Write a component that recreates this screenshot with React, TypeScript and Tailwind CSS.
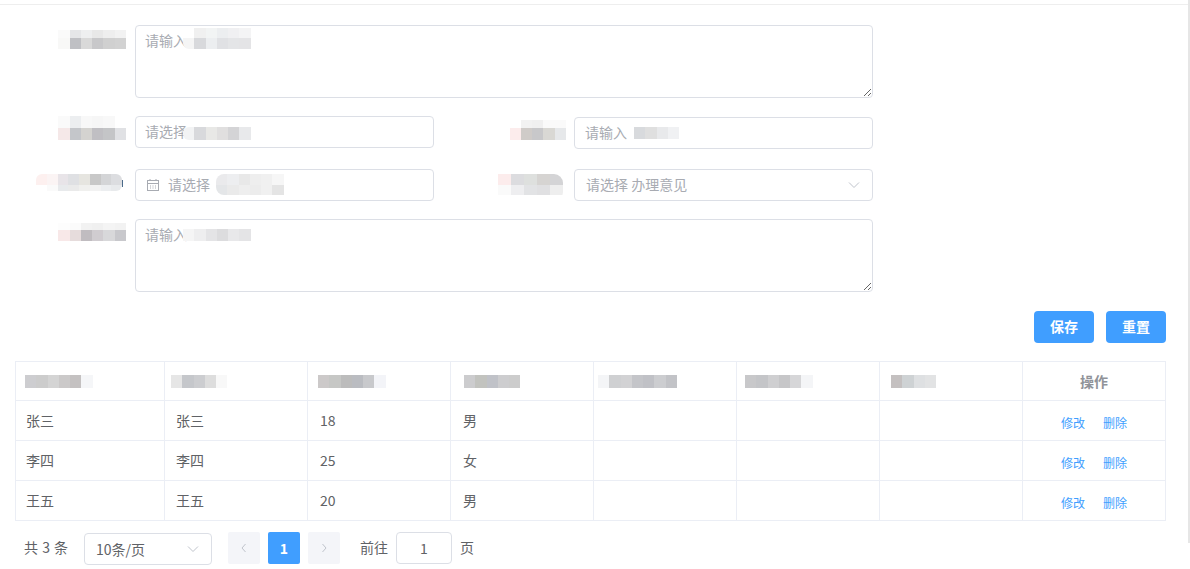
const FONT = "font-['Noto_Sans_CJK_SC',sans-serif]";

// Blurred-out bits of the screenshot: rows of small tiles, each row is one list of colours.
function Mosaic({ rows, className = "" }: { rows: { h: string; w: string; tiles: string[] }[]; className?: string }) {
  return (
    <div className={`flex flex-col overflow-hidden ${className}`}>
      {rows.map((row, i) => (
        <div key={i} className={`flex ${row.h}`}>
          {row.tiles.map((t, j) => (
            <span key={j} className={`block h-full ${row.w} ${t}`} />
          ))}
        </div>
      ))}
    </div>
  );
}

const L = { w: "w-[11.3px]" };

const LABEL_1 = [
  { h: "h-[8px]", ...L, tiles: ["bg-[#fafafa]", "bg-[#e5e6e8]", "bg-[#eeeff0]", "bg-[#e8e8e8]", "bg-[#eeeeee]", "bg-[#f2f2f2]"] },
  { h: "h-[11px]", ...L, tiles: ["bg-[#f8f8f7]", "bg-[#bfc0c4]", "bg-[#d9d9d9]", "bg-[#c8c8ca]", "bg-[#d0d0d0]", "bg-[#d2d2d2]"] },
];
const HINT_1 = [
  { h: "h-[10px]", ...L, tiles: ["bg-white", "bg-[#f0f0f0]", "bg-[#f2f4f4]", "bg-[#eceef0]", "bg-[#f0f0f2]", "bg-[#f4f4f5]"] },
  { h: "h-[11px]", ...L, tiles: ["bg-[#f5f5f5]", "bg-[#d8d9dc]", "bg-[#eceef0]", "bg-[#e0e1e4]", "bg-[#e4e5e7]", "bg-[#e4e4e6]"] },
];
const LABEL_2 = [
  { h: "h-[12px]", ...L, tiles: ["bg-[#fafafa]", "bg-[#eceef0]", "bg-[#f8f8f8]", "bg-[#f6f6f6]", "bg-[#f8f8f8]", "bg-white"] },
  { h: "h-[12px]", ...L, tiles: ["bg-[#f5e8e8]", "bg-[#c4c6ca]", "bg-[#d4d3d0]", "bg-[#c0bfc3]", "bg-[#c4c5c7]", "bg-[#e0e1e4]"] },
];
const HINT_2 = [
  { h: "h-[13px]", ...L, tiles: ["bg-[#f2f3f4]", "bg-[#d8d9dc]", "bg-[#e8e8e6]", "bg-[#e0dfdf]", "bg-[#d4d4d6]", "bg-[#e8e9eb]"] },
];
const LABEL_3 = [
  { h: "h-[11px]", w: "w-[10.75px]", tiles: ["bg-[#fdf0ef]", "bg-[#fbf4f4]", "bg-[#e8e4e8]", "bg-[#dfe0e3]", "bg-[#e6e5e0]", "bg-[#c8c8c8]", "bg-[#d4d5d7]", "bg-[#dcdde0]"] },
  { h: "h-[6px]", w: "w-[10.75px]", tiles: ["bg-white", "bg-[#fafafa]", "bg-[#e8eaec]", "bg-[#eaeaea]", "bg-[#f0f0ee]", "bg-[#f2f2f2]", "bg-[#eceef0]", "bg-[#e8eaec]"] },
];
const HINT_3 = [
  { h: "h-[11px]", ...L, tiles: ["bg-[#eaeaec]", "bg-[#edeef0]", "bg-[#e8e8e8]", "bg-[#eeeeee]", "bg-[#f0f0f0]", "bg-[#f6f6f6]"] },
  { h: "h-[10px]", ...L, tiles: ["bg-[#e4e6e8]", "bg-[#eaeaea]", "bg-[#eeeeee]", "bg-[#ececec]", "bg-[#f0f0f0]", "bg-[#e4e4e4]"] },
];
const LABEL_4 = [
  { h: "h-[7px]", ...L, tiles: ["bg-[#fdfdfd]", "bg-[#fbfbfb]", "bg-[#f2f2f2]", "bg-[#f0f0f0]", "bg-[#f4f4f4]", "bg-[#f2f2f2]"] },
  { h: "h-[11px]", ...L, tiles: ["bg-[#f8e8e8]", "bg-[#e6dcdc]", "bg-[#c0bcc0]", "bg-[#d0ccd0]", "bg-[#d8d8da]", "bg-[#c8c8cc]"] },
];
const HINT_4 = [
  { h: "h-[12px]", ...L, tiles: ["bg-[#f5f5f5]", "bg-[#eeeeef]", "bg-[#e4e4e6]", "bg-[#dcdcde]", "bg-[#e8e8ea]", "bg-[#e4e4e6]"] },
];
const RIGHT_LABEL_2 = [
  { h: "h-[8px]", ...L, tiles: ["bg-white", "bg-[#f2f2f2]", "bg-[#f0f0f0]", "bg-[#fafafa]", "bg-[#fafafa]"] },
  { h: "h-[12px]", ...L, tiles: ["bg-[#fcecec]", "bg-[#cfcbc8]", "bg-[#c8c8ca]", "bg-[#d9d8d4]", "bg-[#e6e8ea]"] },
];
const RIGHT_HINT_2 = [
  { h: "h-[12px]", ...L, tiles: ["bg-[#d8dadd]", "bg-[#dfdfdf]", "bg-[#e8e9eb]", "bg-[#f0f1f3]"] },
];
const RIGHT_LABEL_3 = [
  { h: "h-[11px]", w: "w-[13px]", tiles: ["bg-[#fcecec]", "bg-[#dcdcdf]", "bg-[#dee0de]", "bg-[#d6d4d2]", "bg-[#d4d4d6]"] },
  { h: "h-[10px]", w: "w-[13px]", tiles: ["bg-[#fafafa]", "bg-[#eeeef0]", "bg-[#e2e3e5]", "bg-[#e0e0e2]", "bg-[#eeeeee]"] },
];

const HEAD = [
  { pad: "pl-[9px]", tiles: ["bg-[#cdcdd0]", "bg-[#cccccc]", "bg-[#d4d4d4]", "bg-[#cbc9c9]", "bg-[#c4c1c1]", "bg-[#f5f6f8]"] },
  { pad: "pl-[6px]", tiles: ["bg-[#e6e6e6]", "bg-[#c5c7cb]", "bg-[#cccdd0]", "bg-[#dddddd]", "bg-[#f8f8f8]"] },
  { pad: "pl-[10px]", tiles: ["bg-[#ccc9c9]", "bg-[#c6c7c5]", "bg-[#bcbcbc]", "bg-[#babcc1]", "bg-[#c8c9cc]", "bg-[#f3f4f8]"] },
  { pad: "pl-[13px]", tiles: ["bg-[#ccccce]", "bg-[#c2c3bf]", "bg-[#c0c2c8]", "bg-[#cdcdcf]", "bg-[#cccccc]"] },
  { pad: "pl-[4px]", tiles: ["bg-[#f4f5f7]", "bg-[#cfd0d2]", "bg-[#d2d2d4]", "bg-[#c4c5c9]", "bg-[#c0c1c6]", "bg-[#cccdd0]", "bg-[#c2c3c7]"] },
  { pad: "pl-[8px]", tiles: ["bg-[#c8c8ca]", "bg-[#c4c5c8]", "bg-[#cfcfd1]", "bg-[#c6c6c8]", "bg-[#d6d6d8]", "bg-[#f4f5f7]"] },
  { pad: "pl-[11px]", tiles: ["bg-[#c4c0c0]", "bg-[#ced2d4]", "bg-[#dee0e2]", "bg-[#e2e3e4]"] },
];

const ROWS = [
  { name: "张三", nick: "张三", age: "18", sex: "男" },
  { name: "李四", nick: "李四", age: "25", sex: "女" },
  { name: "王五", nick: "王五", age: "20", sex: "男" },
];

const BOX = "block rounded-[4px] border border-[#dcdfe6] bg-white text-[14px] text-[#606266] outline-none placeholder:text-[#a8abb2]";

function Calendar() {
  return (
    <svg width="12" height="12" viewBox="0 0 12 12" fill="none" stroke="#a8abb2" strokeWidth="1">
      <rect x="0.5" y="1.5" width="11" height="10" />
      <path d="M0.5 4.5h11M3 0v2M9 0v2" />
      <path d="M3 7h1M5.5 7h1M8 7h1M3 9h1M5.5 9h1M8 9h1" />
    </svg>
  );
}

function Chevron({ dir, className = "" }: { dir: "down" | "left" | "right"; className?: string }) {
  const d = dir === "down" ? "M1 3.5l5 5 5-5" : dir === "left" ? "M7.5 2l-3.5 4 3.5 4" : "M4.5 2l3.5 4-3.5 4";
  return (
    <svg width="12" height="12" viewBox="0 0 12 12" fill="none" stroke="#c0c4cc" strokeWidth="1" className={className}>
      <path d={d} />
    </svg>
  );
}

function PageButton({ children, active }: { children: React.ReactNode; active?: boolean }) {
  return (
    <div className={`flex h-8 w-8 items-center justify-center rounded-[2px] text-[14px] font-bold ${active ? "bg-[#409eff] text-white" : "bg-[#f4f5f9]"}`}>
      {children}
    </div>
  );
}

export default function App() {
  return (
    <div className={`relative h-[569px] w-[1190px] overflow-hidden bg-white ${FONT}`}>
      <div className="mt-1 h-px bg-[#eeeeee]" />
      <div className="absolute right-0 top-0 h-[543px] w-[2px] bg-[#e6e6e6]" />

      {/* form */}
      <div className="flex pt-5">
        <div className="flex w-[135px] justify-end pr-[9px] pt-[5px]">
          <Mosaic rows={LABEL_1} />
        </div>
        <div className="relative">
          <textarea placeholder="请输入" className={`${BOX} h-[73px] w-[738px] resize-y px-[9px] pb-[6px] pt-[4px]`} />
          <Mosaic rows={HINT_1} className="absolute left-[48px] top-[3px] rounded-l-[6px]" />
        </div>
      </div>

      <div className="mt-[18px] flex">
        <div className="flex w-[135px] justify-end pr-[9px]">
          <Mosaic rows={LABEL_2} className="rounded-bl-[8px]" />
        </div>
        <div className="relative">
          <input placeholder="请选择" className={`${BOX} h-8 w-[299px] px-[9px] pb-[2px]`} />
          <Mosaic rows={HINT_2} className="absolute left-[48px] top-[11px] rounded-l-[6px]" />
        </div>
        <div className="mt-px flex w-[140px] justify-end pr-2 pt-[3px]">
          <Mosaic rows={RIGHT_LABEL_2} />
        </div>
        <div className="relative mt-px">
          <input placeholder="请输入" className={`${BOX} h-8 w-[299px] px-[10px] pb-[2px]`} />
          <Mosaic rows={RIGHT_HINT_2} className="absolute left-[60px] top-[10px]" />
        </div>
      </div>

      <div className="mt-5 flex">
        <div className="flex w-[135px] items-start justify-end pr-[12px] pt-[5px]">
          <Mosaic rows={LABEL_3} className="rounded-[6px]" />
          <span className="mt-[6px] h-[7px] w-px bg-[#4a6a8a]" />
        </div>
        <div className="relative flex h-8 w-[299px] items-center rounded-[4px] border border-[#dcdfe6] bg-white pl-[11px]">
          <Calendar />
          <span className="mb-[2px] ml-[9px] text-[14px] text-[#a8abb2]">请选择</span>
          <Mosaic rows={HINT_3} className="absolute left-[80px] top-[4px] rounded-l-[8px]" />
        </div>
        <div className="flex w-[140px] justify-end pr-[11px] pt-[5px]">
          <Mosaic rows={RIGHT_LABEL_3} className="rounded-r-[9px]" />
        </div>
        <div className="flex h-8 w-[299px] items-center justify-between rounded-[4px] border border-[#dcdfe6] bg-white pl-[11px] pr-[12px]">
          <span className="mb-[2px] text-[14px] text-[#a8abb2]">请选择 办理意见</span>
          <Chevron dir="down" />
        </div>
      </div>

      <div className="mt-[18px] flex">
        <div className="flex w-[135px] justify-end pr-[9px] pt-[4px]">
          <Mosaic rows={LABEL_4} />
        </div>
        <div className="relative">
          <textarea placeholder="请输入" className={`${BOX} h-[73px] w-[738px] resize-y px-[9px] pb-[6px] pt-[4px]`} />
          <Mosaic rows={HINT_4} className="absolute left-[48px] top-[10px]" />
        </div>
      </div>

      {/* actions */}
      <div className="mt-[19px] flex w-[1166px] justify-end gap-3">
        <button className="h-8 w-[60px] rounded-[4px] bg-[#409eff] pb-[2px] text-[14px] font-bold text-white">保存</button>
        <button className="h-8 w-[60px] rounded-[4px] bg-[#409eff] pb-[2px] text-[14px] font-bold text-white">重置</button>
      </div>

      {/* table */}
      <div className="ml-[15px] mt-[18px] w-[1150px]">
        <table className="w-full table-fixed border-collapse text-[14px] text-[#606266]">
          <colgroup>
            <col className="w-[149px]" />
            <col className="w-[143px]" />
            <col className="w-[143px]" />
            <col className="w-[143px]" />
            <col className="w-[143px]" />
            <col className="w-[143px]" />
            <col className="w-[143px]" />
            <col className="w-[143px]" />
          </colgroup>
          <thead>
            <tr className="h-[39px]">
              {HEAD.map((h, i) => (
                <th key={i} className={`border border-[#ebeef5] ${h.pad} align-top pt-[13px]`}>
                  <Mosaic rows={[{ h: "h-[13px]", w: "w-[11.3px]", tiles: h.tiles }]} />
                </th>
              ))}
              <th className="border border-[#ebeef5] text-[14px] font-bold text-[#909399]">操作</th>
            </tr>
          </thead>
          <tbody>
            {ROWS.map((r) => (
              <tr key={r.age} className="h-10">
                <td className="border border-[#ebeef5] pl-[10px]">{r.name}</td>
                <td className="border border-[#ebeef5] pl-[11px]">{r.nick}</td>
                <td className="border border-[#ebeef5] pl-3">{r.age}</td>
                <td className="border border-[#ebeef5] pl-3">{r.sex}</td>
                <td className="border border-[#ebeef5]" />
                <td className="border border-[#ebeef5]" />
                <td className="border border-[#ebeef5]" />
                <td className="border border-[#ebeef5]">
                  <div className="flex justify-center gap-[18px] pt-[4px] text-[12px] text-[#409eff]">
                    <span>修改</span>
                    <span>删除</span>
                  </div>
                </td>
              </tr>
            ))}
          </tbody>
        </table>
      </div>

      {/* pagination */}
      <div className="ml-6 mt-[11px] flex items-start text-[14px] text-[#606266]">
        <span className="mt-[5px] w-[60px] [word-spacing:1px]">共 3 条</span>
        <div className="mt-px flex h-8 w-[128px] items-center justify-between rounded-[4px] border border-[#dcdfe6] pl-[11px] pr-[12px]">
          <span>10条/页</span>
          <Chevron dir="down" />
        </div>
        <div className="ml-4 flex gap-2">
          <PageButton><Chevron dir="left" /></PageButton>
          <PageButton active>1</PageButton>
          <PageButton><Chevron dir="right" /></PageButton>
        </div>
        <span className="ml-5 mt-[5px]">前往</span>
        <div className="ml-2 flex h-8 w-14 items-center justify-center rounded-[4px] border border-[#dcdfe6]">1</div>
        <span className="ml-2 mt-[5px]">页</span>
      </div>
    </div>
  );
}
